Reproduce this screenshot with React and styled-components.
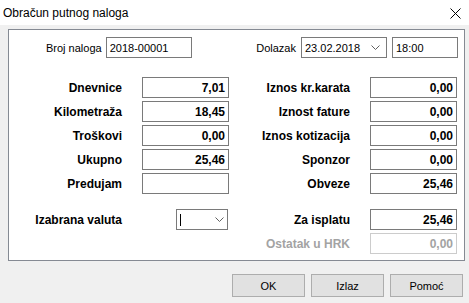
import React from 'react'
import styled, {createGlobalStyle} from 'styled-components'

const Global = createGlobalStyle`
html, body {
  margin: 0;
  padding: 0;
  width: 469px;
  height: 303px;
  overflow: hidden;
  background: #f0f0f0;
}
* { box-sizing: border-box; }
`

const Window = styled.div`
width: 469px;
height: 303px;
display: flex;
flex-direction: column;
background: #f0f0f0;
font-family: "Liberation Sans", Arial, sans-serif;
color: #000;
`

const TitleBar = styled.div`
height: 25px;
flex: none;
background: #fff;
display: flex;
align-items: center;
justify-content: space-between;
padding: 0 8px 0 3px;
font-size: 12px;
`

const CloseIcon = styled.svg`
width: 11px;
height: 11px;
margin-top: 1px;
`

const Body = styled.div`
flex: 1;
display: flex;
flex-direction: column;
padding: 4px 5px 0 8px;
`

const Panel = styled.div`
background: #fff;
border: 1px solid #858a93;
width: 457px;
height: 232px;
padding: 7px 6px 0 0;
`

const TopRow = styled.div`
display: flex;
justify-content: space-between;
align-items: center;
height: 21px;
margin-bottom: 19px;
`

const Group = styled.div`
display: flex;
align-items: center;
gap: ${p => p.gap || 4}px;
padding-left: ${p => p.left || 0}px;
font-size: 11px;
`

const TextBox = styled.div`
width: ${p => p.w}px;
height: 21px;
border: 1px solid #7a7a7a;
display: flex;
align-items: center;
justify-content: space-between;
padding: 0 3px;
font-size: 11px;
`

const Chevron = styled.svg`
width: 9px;
height: 5px;
margin-right: 3px;
`

const Grid = styled.div`
display: grid;
grid-template-columns: 133px 87px 141px 87px;
grid-template-rows: repeat(5, 21px) 9px 21px 21px;
row-gap: 3px;
`

const Spacer = styled.div`
grid-column: 1 / -1;
`

const Label = styled.div`
font-size: 12px;
font-weight: bold;
text-align: right;
padding-right: 20px;
align-self: center;
color: ${p => (p.disabled ? '#a3a3a3' : '#000')};
`

const Value = styled.div`
height: 21px;
border: 1px solid ${p => (p.disabled ? '#cccccc' : '#7a7a7a')};
color: ${p => (p.disabled ? '#a3a3a3' : '#000')};
font-size: 12px;
font-weight: bold;
display: flex;
align-items: center;
justify-content: flex-end;
padding-right: 3px;
`

const Select = styled.div`
justify-self: end;
width: 52px;
height: 21px;
border: 1px solid #7a7a7a;
display: flex;
align-items: center;
justify-content: space-between;
padding-left: 3px;
margin-right: 1px;
`

const Caret = styled.div`
width: 1px;
height: 12px;
background: #000;
`

const Footer = styled.div`
display: flex;
justify-content: flex-end;
gap: 6px;
padding: 13px 1px 0 0;
`

const Button = styled.button`
width: 73px;
height: 23px;
background: #e1e1e1;
border: 1px solid #adadad;
font-family: "Liberation Sans", Arial, sans-serif;
font-size: 11px;
color: #000;
padding: 0;
`

const Down = () => (
  <Chevron viewBox="0 0 9 5">
    <polyline points="0.5,0.5 4.5,4.5 8.5,0.5" fill="none" stroke="#606060" strokeWidth="1" />
  </Chevron>
)

const rows = [
  ['Dnevnice', '7,01', 'Iznos kr.karata', '0,00'],
  ['Kilometraža', '18,45', 'Iznost fature', '0,00'],
  ['Troškovi', '0,00', 'Iznos kotizacija', '0,00'],
  ['Ukupno', '25,46', 'Sponzor', '0,00'],
  ['Predujam', '', 'Obveze', '25,46'],
]

export default function App() {
  return (
    <Window>
      <Global />
      <TitleBar>
        <span>Obračun putnog naloga</span>
        <CloseIcon viewBox="0 0 11 11">
          <path d="M0.5 0.5L10.5 10.5M10.5 0.5L0.5 10.5" stroke="#000" strokeWidth="1" />
        </CloseIcon>
      </TitleBar>
      <Body>
        <Panel>
          <TopRow>
            <Group left={37}>
              <span>Broj naloga</span>
              <TextBox w={86}>2018-00001</TextBox>
            </Group>
            <Group gap={5}>
              <span>Dolazak</span>
              <TextBox w={86}>
                <span>23.02.2018</span>
                <Down />
              </TextBox>
              <TextBox w={66}>18:00</TextBox>
            </Group>
          </TopRow>
          <Grid>
            {rows.map(r => (
              <React.Fragment key={r[0]}>
                <Label>{r[0]}</Label>
                <Value>{r[1]}</Value>
                <Label>{r[2]}</Label>
                <Value>{r[3]}</Value>
              </React.Fragment>
            ))}
            <Spacer />
            <Label>Izabrana valuta</Label>
            <Select>
              <Caret />
              <Down />
            </Select>
            <Label>Za isplatu</Label>
            <Value>25,46</Value>
            <span />
            <span />
            <Label disabled>Ostatak u HRK</Label>
            <Value disabled>0,00</Value>
          </Grid>
        </Panel>
        <Footer>
          <Button>OK</Button>
          <Button>Izlaz</Button>
          <Button>Pomoć</Button>
        </Footer>
      </Body>
    </Window>
  )
}
